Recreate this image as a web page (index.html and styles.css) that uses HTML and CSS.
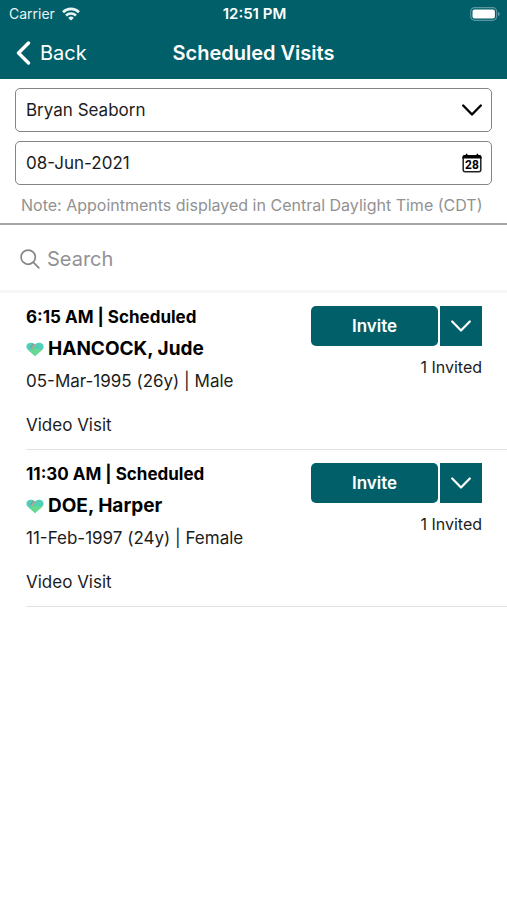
FILE: index.html
```html
<!DOCTYPE html>
<html lang="en">
<head>
<meta charset="utf-8">
<meta name="viewport" content="width=device-width, initial-scale=1">
<title>Scheduled Visits</title>
<link rel="stylesheet" href="styles.css">
</head>
<body>
<header class="header">
  <div class="status">
    <div class="carrier">
      <span>Carrier</span>
      <svg width="18" height="14" viewBox="0 0 18 14" fill="none" stroke="currentColor" stroke-width="2.6" aria-hidden="true">
        <path d="M1 5.2a11.4 11.4 0 0 1 16 0"/>
        <path d="M4 8.5a7.2 7.2 0 0 1 10 0"/>
        <path d="M9 13.6 6.2 10.9a4 4 0 0 1 5.6 0z" fill="currentColor" stroke="none"/>
      </svg>
    </div>
    <span class="clock">12:51 PM</span>
    <svg class="battery" width="30" height="14" viewBox="0 0 30 14" aria-hidden="true">
      <rect x=".7" y=".7" width="26" height="12.6" rx="4" fill="none" stroke="#5b989f" stroke-width="1.2"/>
      <rect x="2.5" y="2.5" width="22.4" height="9" rx="2" fill="#fff"/>
      <path d="M28 4.8q1.8.8 1.8 2.2T28 9.2z" fill="#5b989f"/>
    </svg>
  </div>
  <nav class="nav">
    <a class="back" href="#">
      <svg width="16" height="24" viewBox="0 0 16 24" fill="none" stroke="currentColor" stroke-width="3.4" stroke-linecap="round" stroke-linejoin="round" aria-hidden="true"><path d="M12.5 2 2.5 12l10 10"/></svg>
      Back
    </a>
    <h1 class="title">Scheduled Visits</h1>
  </nav>
</header>
<main>
  <section class="filters">
    <div class="field">
      <select class="control" aria-label="Provider"><option>Bryan Seaborn</option></select>
      <svg class="field-icon" width="20" height="20" viewBox="0 0 20 20" fill="none" stroke="currentColor" stroke-width="2.4" stroke-linecap="round" stroke-linejoin="round" aria-hidden="true"><path d="m1.2 5.5 8.8 9 8.8-9"/></svg>
    </div>
    <div class="field">
      <input class="control" type="text" value="08-Jun-2021" aria-label="Date">
      <svg class="field-icon" width="20" height="20" viewBox="0 0 20 20" aria-hidden="true">
        <rect x="1.2" y="2.7" width="17.6" height="16" rx="2" fill="none" stroke="#222" stroke-width="1.5"/>
        <path d="M.5 5.5V4q0-2 2-2h15q2 0 2 2v1.5zM3.8.8h1.6v2H3.8zM14.6.8h1.6v2h-1.6z"/>
        <text class="day" x="10" y="16" text-anchor="middle">28</text>
      </svg>
    </div>
    <p class="note">Note: Appointments displayed in Central Daylight Time (CDT)</p>
  </section>
  <div class="search">
    <svg width="20" height="20" viewBox="0 0 20 20" fill="none" stroke="currentColor" stroke-width="1.7" stroke-linecap="round" aria-hidden="true"><circle cx="8.2" cy="8.2" r="7.1"/><path d="m13.4 13.4 5.4 5.4"/></svg>
    <input class="search-input" type="search" placeholder="Search" aria-label="Search">
  </div>
  <ul class="visits">
    <li class="visit">
      <div class="info">
        <p class="time">6:15 AM | Scheduled</p>
        <h2 class="name">
          <svg class="heart" width="18" height="15" viewBox="0 0 18 15" aria-hidden="true">
            <path d="M9 14 1.6 7.5C-.8 5 .6 1 4.2.8 6.300.7 8 1.400 9 2.500c1-1.100 2.700-1.800 4.800-1.700 3.600.2 5 4.200 2.600 6.700z" fill="#4fd0b8"/>
            <path d="M2.600 8.400 11 6.500l5 1.400L9 14z" fill="#66d98f"/>
            <path d="m5.200 6.200 3.400-4.200 1.300.8-3.300 4z" fill="#d99a78"/>
            <path d="m3.400 5.400 3.600-4 1.300.6-3.600 4.200z" fill="#6fa3b4"/>
          </svg>
          HANCOCK, Jude
        </h2>
        <p class="detail">05-Mar-1995 (26y) | Male</p>
        <p class="kind">Video Visit</p>
      </div>
      <div class="actions">
        <div class="split">
          <button class="invite" type="button">Invite</button>
          <button class="more" type="button" aria-label="More invite options"><svg width="20" height="12" viewBox="0 0 20 12" fill="none" stroke="currentColor" stroke-width="2.2" stroke-linecap="round" stroke-linejoin="round" aria-hidden="true"><path d="m1.2 1.5 8.8 9 8.8-9"/></svg></button>
        </div>
        <p class="invited">1 Invited</p>
      </div>
    </li>
    <li class="visit">
      <div class="info">
        <p class="time">11:30 AM | Scheduled</p>
        <h2 class="name">
          <svg class="heart" width="18" height="15" viewBox="0 0 18 15" aria-hidden="true">
            <path d="M9 14 1.6 7.5C-.8 5 .6 1 4.2.8 6.300.7 8 1.400 9 2.500c1-1.100 2.700-1.800 4.800-1.700 3.600.2 5 4.200 2.600 6.700z" fill="#4fd0b8"/>
            <path d="M2.600 8.400 11 6.500l5 1.400L9 14z" fill="#66d98f"/>
            <path d="m5.200 6.200 3.400-4.200 1.300.8-3.300 4z" fill="#d99a78"/>
            <path d="m3.400 5.400 3.600-4 1.300.6-3.600 4.200z" fill="#6fa3b4"/>
          </svg>
          DOE, Harper
        </h2>
        <p class="detail">11-Feb-1997 (24y) | Female</p>
        <p class="kind">Video Visit</p>
      </div>
      <div class="actions">
        <div class="split">
          <button class="invite" type="button">Invite</button>
          <button class="more" type="button" aria-label="More invite options"><svg width="20" height="12" viewBox="0 0 20 12" fill="none" stroke="currentColor" stroke-width="2.2" stroke-linecap="round" stroke-linejoin="round" aria-hidden="true"><path d="m1.2 1.5 8.8 9 8.8-9"/></svg></button>
        </div>
        <p class="invited">1 Invited</p>
      </div>
    </li>
  </ul>
</main>
</body>
</html>
```
FILE: styles.css
```css
* {
  box-sizing: border-box;
}

body {
  margin: 0;
  background: #fff;
  color: #1c1c1c;
  font-family: Inter, "Liberation Sans", sans-serif;
  font-size: 16px;
  line-height: 24px;
}

h1, h2, p, ul {
  margin: 0;
  padding: 0;
}

button, input, select {
  font: inherit;
  color: inherit;
}

svg {
  flex: none;
}

.header {
  background: #015f69;
  color: #fff;
}

.status,
.nav {
  display: grid;
  grid-template-columns: 1fr auto 1fr;
  align-items: center;
}

.status {
  height: 27px;
  padding: 0 7px 0 9px;
  font-size: 14px;
}

.carrier {
  display: flex;
  align-items: center;
  gap: 7px;
  color: #e8f4f5;
}

.clock {
  font-size: 15px;
  font-weight: 600;
}

.battery {
  justify-self: end;
}

.nav {
  height: 52px;
  padding: 0 16px;
}

.back {
  display: flex;
  align-items: center;
  gap: 8px;
  color: inherit;
  font-size: 20px;
  text-decoration: none;
}

.title {
  font-size: 20px;
  font-weight: 600;
}

.filters {
  display: grid;
  gap: 9px;
  padding: 9px 15px 7px;
  border-bottom: 2px solid #a5a5a5;
}

.field {
  display: grid;
  align-items: center;
}

.control,
.field-icon {
  grid-area: 1 / 1;
}

.control {
  width: 100%;
  height: 44px;
  padding: 0 40px 0 10px;
  border: 1px solid #858585;
  border-radius: 5px;
  background: #fff;
  font-size: 17px;
  appearance: none;
}

.field-icon {
  justify-self: end;
  margin-right: 10px;
  color: #000;
  pointer-events: none;
}

.day {
  font-family: Roboto, sans-serif;
  font-size: 12px;
  font-weight: 700;
}

.note {
  padding-left: 6px;
  color: #929292;
  line-height: 22px;
}

.search {
  display: flex;
  align-items: center;
  gap: 7px;
  height: 68px;
  padding: 3px 20px 0;
  border-bottom: 3px solid #f6f6f6;
  color: #85858a;
}

.search-input {
  flex: 1;
  min-width: 0;
  padding: 0;
  border: 0;
  background: none;
  font-size: 20px;
}

.search-input::placeholder {
  color: #929296;
  opacity: 1;
}

.visits {
  padding-left: 26px;
  list-style: none;
}

.visit {
  display: flex;
  justify-content: space-between;
  gap: 16px;
  padding: 12px 25px 12px 0;
  border-bottom: 1px solid #e2e2e2;
}

.info {
  font-size: 17px;
}

.time {
  color: #000;
  font-weight: 700;
}

.name {
  display: flex;
  align-items: center;
  gap: 4px;
  padding: 4px 0;
  color: #000;
  font-size: 19px;
  font-weight: 700;
  line-height: 32px;
}

.kind {
  padding-top: 20px;
}

.split {
  display: flex;
  gap: 2px;
  padding-top: 1px;
}

.invite,
.more {
  height: 40px;
  padding: 0;
  border: 0;
  background: #015f69;
  color: #fff;
}

.invite {
  width: 127px;
  border-radius: 5px;
  font-size: 17px;
  font-weight: 600;
}

.more {
  display: grid;
  place-items: center;
  width: 42px;
}

.invited {
  padding-top: 9px;
  text-align: right;
}
```
